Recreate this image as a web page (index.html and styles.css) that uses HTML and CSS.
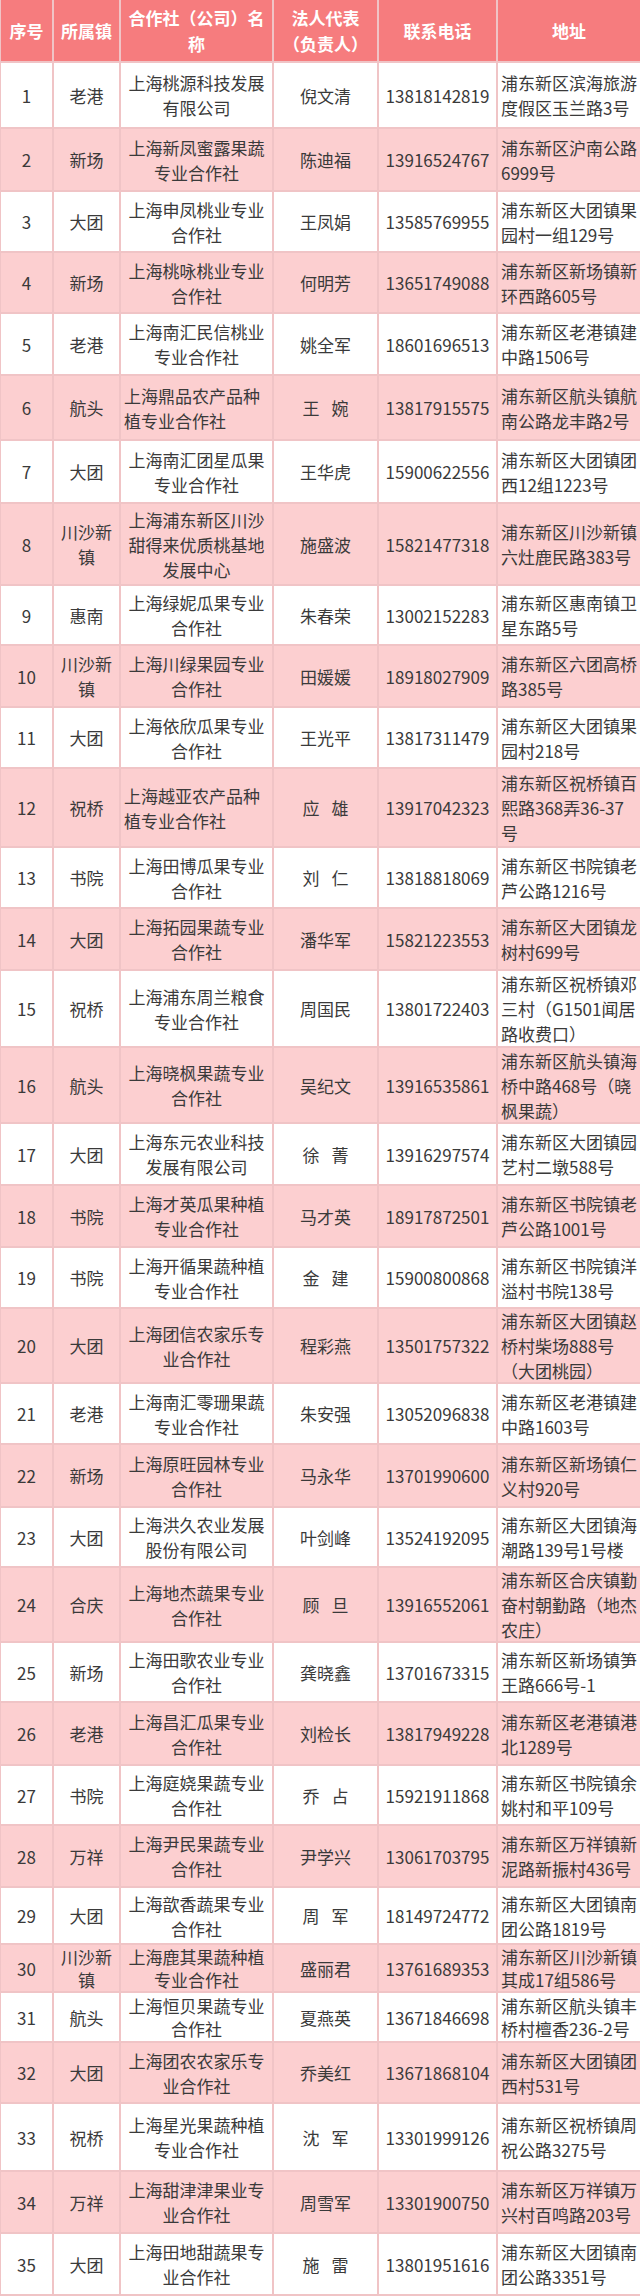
FILE: index.html
```html
<!DOCTYPE html>
<html lang="zh-CN">
<head>
<meta charset="utf-8">
<title>浦东新区桃业合作社名录</title>
<link rel="stylesheet" href="styles.css">
</head>
<body>
<div class="sheet">
  <div class="row head">
    <div class="cell">序号</div>
    <div class="cell">所属镇</div>
    <div class="cell">合作社（公司）名<br>称</div>
    <div class="cell">法人代表<br>（负责人）</div>
    <div class="cell">联系电话</div>
    <div class="cell">地址</div>
  </div>
  <div class="row"><div class="cell">1</div><div class="cell">老港</div><div class="cell">上海桃源科技发展有限公司</div><div class="cell rep">倪文清</div><div class="cell">13818142819</div><div class="cell addr">浦东新区滨海旅游度假区玉兰路3号</div></div>
  <div class="row"><div class="cell">2</div><div class="cell">新场</div><div class="cell">上海新凤蜜露果蔬专业合作社</div><div class="cell rep">陈迪福</div><div class="cell">13916524767</div><div class="cell addr">浦东新区沪南公路6999号</div></div>
  <div class="row"><div class="cell">3</div><div class="cell">大团</div><div class="cell">上海申凤桃业专业合作社</div><div class="cell rep">王凤娟</div><div class="cell">13585769955</div><div class="cell addr">浦东新区大团镇果园村一组129号</div></div>
  <div class="row"><div class="cell">4</div><div class="cell">新场</div><div class="cell">上海桃咏桃业专业合作社</div><div class="cell rep">何明芳</div><div class="cell">13651749088</div><div class="cell addr">浦东新区新场镇新环西路605号</div></div>
  <div class="row"><div class="cell">5</div><div class="cell">老港</div><div class="cell">上海南汇民信桃业专业合作社</div><div class="cell rep">姚全军</div><div class="cell">18601696513</div><div class="cell addr">浦东新区老港镇建中路1506号</div></div>
  <div class="row"><div class="cell">6</div><div class="cell">航头</div><div class="cell left">上海鼎品农产品种植专业合作社</div><div class="cell rep">王 婉</div><div class="cell">13817915575</div><div class="cell addr">浦东新区航头镇航南公路龙丰路2号</div></div>
  <div class="row"><div class="cell">7</div><div class="cell">大团</div><div class="cell">上海南汇团星瓜果专业合作社</div><div class="cell rep">王华虎</div><div class="cell">15900622556</div><div class="cell addr">浦东新区大团镇团西12组1223号</div></div>
  <div class="row"><div class="cell">8</div><div class="cell">川沙新镇</div><div class="cell">上海浦东新区川沙甜得来优质桃基地发展中心</div><div class="cell rep">施盛波</div><div class="cell">15821477318</div><div class="cell addr">浦东新区川沙新镇六灶鹿民路383号</div></div>
  <div class="row"><div class="cell">9</div><div class="cell">惠南</div><div class="cell">上海绿妮瓜果专业合作社</div><div class="cell rep">朱春荣</div><div class="cell">13002152283</div><div class="cell addr">浦东新区惠南镇卫星东路5号</div></div>
  <div class="row"><div class="cell">10</div><div class="cell">川沙新镇</div><div class="cell">上海川绿果园专业合作社</div><div class="cell rep">田媛媛</div><div class="cell">18918027909</div><div class="cell addr">浦东新区六团高桥路385号</div></div>
  <div class="row"><div class="cell">11</div><div class="cell">大团</div><div class="cell">上海依欣瓜果专业合作社</div><div class="cell rep">王光平</div><div class="cell">13817311479</div><div class="cell addr">浦东新区大团镇果园村218号</div></div>
  <div class="row"><div class="cell">12</div><div class="cell">祝桥</div><div class="cell left">上海越亚农产品种植专业合作社</div><div class="cell rep">应 雄</div><div class="cell">13917042323</div><div class="cell addr">浦东新区祝桥镇百熙路368弄36-37号</div></div>
  <div class="row"><div class="cell">13</div><div class="cell">书院</div><div class="cell">上海田博瓜果专业合作社</div><div class="cell rep">刘 仁</div><div class="cell">13818818069</div><div class="cell addr">浦东新区书院镇老芦公路1216号</div></div>
  <div class="row"><div class="cell">14</div><div class="cell">大团</div><div class="cell">上海拓园果蔬专业合作社</div><div class="cell rep">潘华军</div><div class="cell">15821223553</div><div class="cell addr">浦东新区大团镇龙树村699号</div></div>
  <div class="row"><div class="cell">15</div><div class="cell">祝桥</div><div class="cell">上海浦东周兰粮食专业合作社</div><div class="cell rep">周国民</div><div class="cell">13801722403</div><div class="cell addr">浦东新区祝桥镇邓三村（G1501闻居路收费口）</div></div>
  <div class="row"><div class="cell">16</div><div class="cell">航头</div><div class="cell">上海晓枫果蔬专业合作社</div><div class="cell rep">吴纪文</div><div class="cell">13916535861</div><div class="cell addr">浦东新区航头镇海桥中路468号（晓枫果蔬）</div></div>
  <div class="row"><div class="cell">17</div><div class="cell">大团</div><div class="cell">上海东元农业科技发展有限公司</div><div class="cell rep">徐 菁</div><div class="cell">13916297574</div><div class="cell addr">浦东新区大团镇园艺村二墩588号</div></div>
  <div class="row"><div class="cell">18</div><div class="cell">书院</div><div class="cell">上海才英瓜果种植专业合作社</div><div class="cell rep">马才英</div><div class="cell">18917872501</div><div class="cell addr">浦东新区书院镇老芦公路1001号</div></div>
  <div class="row"><div class="cell">19</div><div class="cell">书院</div><div class="cell">上海开循果蔬种植专业合作社</div><div class="cell rep">金 建</div><div class="cell">15900800868</div><div class="cell addr">浦东新区书院镇洋溢村书院138号</div></div>
  <div class="row"><div class="cell">20</div><div class="cell">大团</div><div class="cell">上海团信农家乐专业合作社</div><div class="cell rep">程彩燕</div><div class="cell">13501757322</div><div class="cell addr">浦东新区大团镇赵桥村柴场888号（大团桃园）</div></div>
  <div class="row"><div class="cell">21</div><div class="cell">老港</div><div class="cell">上海南汇零珊果蔬专业合作社</div><div class="cell rep">朱安强</div><div class="cell">13052096838</div><div class="cell addr">浦东新区老港镇建中路1603号</div></div>
  <div class="row"><div class="cell">22</div><div class="cell">新场</div><div class="cell">上海原旺园林专业合作社</div><div class="cell rep">马永华</div><div class="cell">13701990600</div><div class="cell addr">浦东新区新场镇仁义村920号</div></div>
  <div class="row"><div class="cell">23</div><div class="cell">大团</div><div class="cell">上海洪久农业发展股份有限公司</div><div class="cell rep">叶剑峰</div><div class="cell">13524192095</div><div class="cell addr">浦东新区大团镇海潮路139号1号楼</div></div>
  <div class="row"><div class="cell">24</div><div class="cell">合庆</div><div class="cell">上海地杰蔬果专业合作社</div><div class="cell rep">顾 旦</div><div class="cell">13916552061</div><div class="cell addr">浦东新区合庆镇勤奋村朝勤路（地杰农庄）</div></div>
  <div class="row"><div class="cell">25</div><div class="cell">新场</div><div class="cell">上海田歌农业专业合作社</div><div class="cell rep">龚晓鑫</div><div class="cell">13701673315</div><div class="cell addr">浦东新区新场镇笋王路666号-1</div></div>
  <div class="row"><div class="cell">26</div><div class="cell">老港</div><div class="cell">上海昌汇瓜果专业合作社</div><div class="cell rep">刘检长</div><div class="cell">13817949228</div><div class="cell addr">浦东新区老港镇港北1289号</div></div>
  <div class="row"><div class="cell">27</div><div class="cell">书院</div><div class="cell">上海庭娆果蔬专业合作社</div><div class="cell rep">乔 占</div><div class="cell">15921911868</div><div class="cell addr">浦东新区书院镇余姚村和平109号</div></div>
  <div class="row"><div class="cell">28</div><div class="cell">万祥</div><div class="cell">上海尹民果蔬专业合作社</div><div class="cell rep">尹学兴</div><div class="cell">13061703795</div><div class="cell addr">浦东新区万祥镇新泥路新振村436号</div></div>
  <div class="row"><div class="cell">29</div><div class="cell">大团</div><div class="cell">上海歆香蔬果专业合作社</div><div class="cell rep">周 军</div><div class="cell">18149724772</div><div class="cell addr">浦东新区大团镇南团公路1819号</div></div>
  <div class="row tight"><div class="cell">30</div><div class="cell">川沙新镇</div><div class="cell">上海鹿其果蔬种植专业合作社</div><div class="cell rep">盛丽君</div><div class="cell">13761689353</div><div class="cell addr">浦东新区川沙新镇其成17组586号</div></div>
  <div class="row tight"><div class="cell">31</div><div class="cell">航头</div><div class="cell">上海恒贝果蔬专业合作社</div><div class="cell rep">夏燕英</div><div class="cell">13671846698</div><div class="cell addr">浦东新区航头镇丰桥村檀香236-2号</div></div>
  <div class="row"><div class="cell">32</div><div class="cell">大团</div><div class="cell">上海团农农家乐专业合作社</div><div class="cell rep">乔美红</div><div class="cell">13671868104</div><div class="cell addr">浦东新区大团镇团西村531号</div></div>
  <div class="row"><div class="cell">33</div><div class="cell">祝桥</div><div class="cell">上海星光果蔬种植专业合作社</div><div class="cell rep">沈 军</div><div class="cell">13301999126</div><div class="cell addr">浦东新区祝桥镇周祝公路3275号</div></div>
  <div class="row"><div class="cell">34</div><div class="cell">万祥</div><div class="cell">上海甜津津果业专业合作社</div><div class="cell rep">周雪军</div><div class="cell">13301900750</div><div class="cell addr">浦东新区万祥镇万兴村百鸣路203号</div></div>
  <div class="row"><div class="cell">35</div><div class="cell">大团</div><div class="cell">上海田地甜蔬果专业合作社</div><div class="cell rep">施 雷</div><div class="cell">13801951616</div><div class="cell addr">浦东新区大团镇南团公路3351号</div></div>
</div>
</body>
</html>
```
FILE: styles.css
```css
html, body {
  margin: 0;
  padding: 0;
  background: #ffffff;
}

body {
  font-family: "Noto Sans CJK SC", "Noto Sans", sans-serif;
}

.sheet {
  width: 640px;
  box-sizing: border-box;
  display: grid;
  grid-template-columns: 51px 65px 151px 103px 117px 142px;
  grid-template-rows:
    61px
    64px 61px 59px 59px 60px 63px 61px 80px 58px 60px
    59px 77px 59px 60px 75px 74px 60px 60px 59px 73px
    59px 61px 58px 73px 58px 61px 58px 60px 55px 46px
    48px 59px 66px 60px 60px;
  gap: 2px;
  padding: 0 0 2px 1px;
  background: #f0c4c6;
}

.row {
  display: contents;
}

.cell {
  display: flex;
  align-items: center;
  justify-content: center;
  text-align: center;
  background: #ffffff;
  color: #3a3a3a;
  font-size: 17px;
  line-height: 25px;
  padding: 0 2px;
  min-width: 0;
}

.row:nth-child(odd) .cell {
  background: #fccfd0;
}

.row.head .cell {
  background: #f67c7e;
  color: #ffffff;
  font-weight: bold;
  line-height: 26px;
}

.cell.left {
  justify-content: flex-start;
  text-align: left;
  padding-left: 3px;
}

.cell.addr {
  justify-content: flex-start;
  text-align: left;
  padding: 0 0 0 3px;
}

.cell.rep {
  word-spacing: 8px;
}

.row.tight .cell {
  line-height: 23px;
}
```
